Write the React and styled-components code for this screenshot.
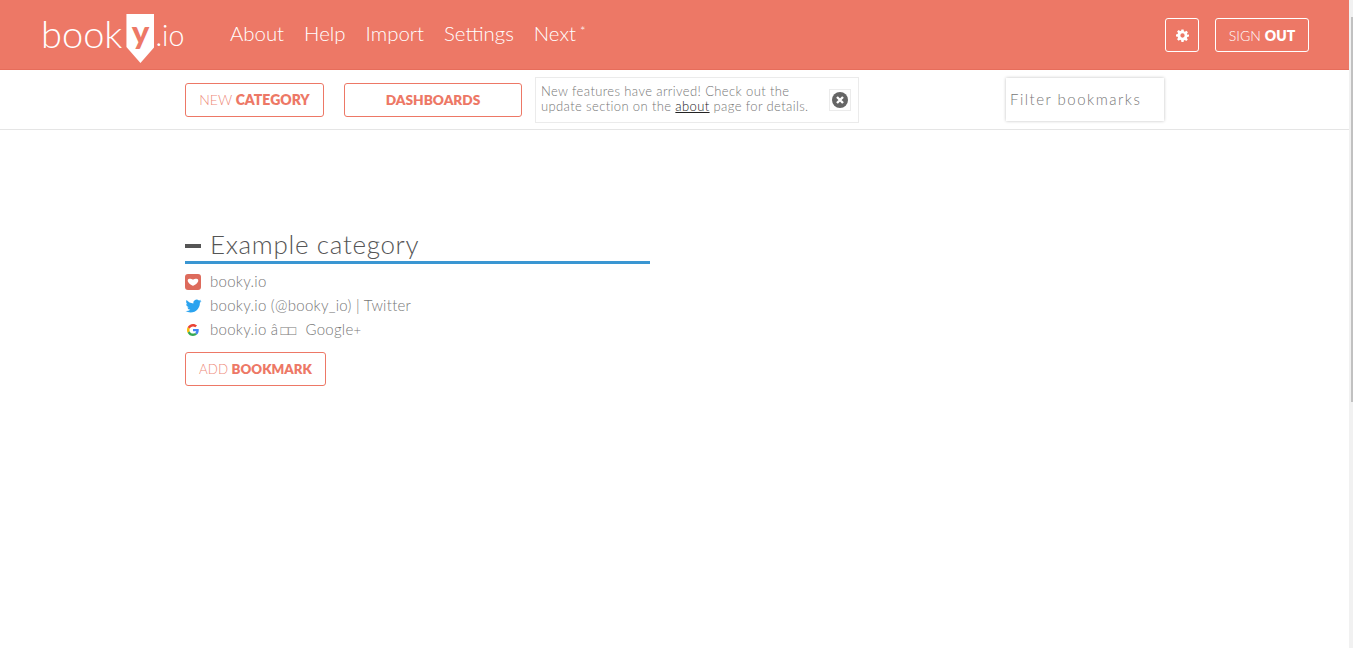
import React from "react";
import styled, { createGlobalStyle } from "styled-components";

const Global = createGlobalStyle`
  html, body { margin: 0; padding: 0; background: #fff; overflow: hidden; }
  body { font-family: Lato, "Liberation Sans", sans-serif; font-weight: 300; }
`;
const coral = "#ed7866";

const Page = styled.div`
  position: relative;
  width: 1353px;
  height: 648px;
  overflow: hidden;
`;
const Content = styled.div`
  width: 1349px;
`;
const Header = styled.header`
  height: 69px;
  background: ${coral};
  border-bottom: 1px solid #e66d5b;
  display: flex;
  align-items: flex-start;
  padding: 0 40px 0 41px;
`;
const Logo = styled.a`
  display: flex;
  align-items: flex-start;
  width: 189px;
  color: #fff;
`;
const LogoWord = styled.span`
  font-size: 38px;
  line-height: 1;
  margin-top: 14px;
`;
const LogoTag = styled.span`
  width: 28px;
  height: 49px;
  margin: 14px 1px 0 4px;
  background: #fff;
  clip-path: polygon(0 0, 100% 0, 100% 33px, 50% 100%, 0 33px);
  color: ${coral};
  font-size: 33px;
  line-height: 35px;
  font-weight: 900;
  text-align: center;
`;
const LogoSuffix = styled.span`
  font-size: 28.5px;
  line-height: 1;
  margin-top: 21px;
`;
const Nav = styled.nav`
  display: flex;
  gap: 20px;
  margin-top: 22px;
`;
const NavLink = styled.a`
  color: #fff;
  font-size: 20.4px;
  line-height: 23px;
`;
const Star = styled.sup`
  font-size: 13px;
  line-height: 0;
  margin-left: 4px;
  vertical-align: 5px;
`;
const HeaderRight = styled.div`
  margin-left: auto;
  display: flex;
  gap: 16px;
  margin-top: 18px;
`;
const HeaderButton = styled.button`
  box-sizing: border-box;
  height: 34px;
  width: ${(p) => p.$w}px;
  padding: 0;
  display: flex;
  align-items: center;
  justify-content: center;
  background: transparent;
  border: 1px solid #fff;
  border-radius: 3px;
  color: #fff;
  font-family: inherit;
  font-size: 14px;
  font-weight: 300;
  b { font-weight: 800; margin-left: 4px; }
`;
const Toolbar = styled.div`
  box-sizing: border-box;
  height: 60px;
  border-bottom: 1px solid #e5e5e5;
  padding: 7px 0 0 185px;
  display: flex;
  align-items: flex-start;
`;
const OutlineButton = styled.button`
  box-sizing: border-box;
  height: 34px;
  width: ${(p) => p.$w}px;
  margin: ${(p) => p.$m || "6px 0 0 0"};
  padding: 0 0 ${(p) => p.$pb ?? 2}px;
  background: #fff;
  border: 1px solid ${coral};
  border-radius: 3px;
  color: #ee8a7a;
  font-family: inherit;
  font-size: ${(p) => p.$size || 14}px;
  font-weight: 300;
  b { font-weight: 800; color: ${coral}; }
`;
const Notice = styled.div`
  box-sizing: border-box;
  width: 324px;
  height: 46px;
  margin-left: 13px;
  border: 1px solid #ebebeb;
  display: flex;
  align-items: center;
  padding: 0 6px 2px 5px;
  justify-content: space-between;
`;
const NoticeText = styled.p`
  margin: 0;
  font-size: 13px;
  line-height: 15px;
  color: #777;
  letter-spacing: 0.38px;
  a { color: #222; text-decoration: underline; }
`;
const CloseBox = styled.span`
  box-sizing: border-box;
  width: 22px;
  height: 22px;
  margin: 2px 1px 0 0;
  border: 1px solid #ebebeb;
  display: flex;
  align-items: center;
  justify-content: center;
`;
const Filter = styled.div`
  box-sizing: border-box;
  width: 158px;
  height: 43px;
  margin: 1px 0 0 147px;
  padding: 0 0 2px 4px;
  display: flex;
  align-items: center;
  background: #fff;
  box-shadow: 0 0 3px rgba(0, 0, 0, 0.25);
  color: #777;
  font-size: 15px;
  letter-spacing: 1.5px;
`;
const Main = styled.main`
  width: 465px;
  margin: 99px 0 0 185px;
`;
const CategoryHead = styled.div`
  display: flex;
  align-items: center;
  height: 32px;
  border-bottom: 3px solid #3a96d2;
`;
const Dash = styled.span`
  width: 16px;
  height: 4px;
  background: #555;
  margin: 2px 9px 0 0;
`;
const Title = styled.h2`
  margin: 0 0 2px;
  font-size: 26px;
  font-weight: 300;
  color: #555;
  letter-spacing: 0.67px;
`;
const List = styled.ul`
  list-style: none;
  margin: 6px 0 0;
  padding: 0;
`;
const Item = styled.li`
  height: 24px;
  display: flex;
  align-items: center;
  color: #777;
  font-size: 15px;
  letter-spacing: 0.27px;
`;
const IconSlot = styled.span`
  width: 25px;
  height: 16px;
  display: flex;
  flex: none;
`;
const Label = styled.span`
  line-height: 24px;
  margin-top: -2px;
  white-space: pre;
`;
const Tofu = styled.span`
  font-family: "DejaVu Sans", sans-serif;
  font-size: 13px;
  line-height: 0;
  letter-spacing: 0;
  margin: 0 5px 0 2px;
`;
const SmallPlus = styled.span`
  font-size: 13px;
  line-height: 0;
`;
const Scrollbar = styled.div`
  position: absolute;
  top: 0;
  right: 0;
  width: 4px;
  height: 100%;
  background: #f1f1f1;
`;
const Thumb = styled.div`
  margin: 17px 0 0 2px;
  width: 2px;
  height: 385px;
  background: #c1c1c1;
`;

const Gear = () => (
  <svg width="13" height="13" viewBox="0 0 24 24" fill="#fff">
    <path fillRule="evenodd" d="M10 1h4l.6 3.200 1.900.8 2.700-1.800 2.800 2.800-1.800 2.700.8 1.900L24 10v4l-3.200.6-.8 1.900 1.800 2.700-2.800 2.800-2.700-1.800-1.900.8L14 23.900h-4l-.6-3.100-1.900-.8-2.700 1.800L2 19l1.800-2.700-.8-1.900L0 14v-4l3-.6.8-1.900L2 4.800 4.800 2l2.700 1.800 1.900-.8zM12 8a4 4 0 1 0 0 8 4 4 0 0 0 0-8z" />
  </svg>
);
const CloseIcon = () => (
  <svg width="16" height="16" viewBox="0 0 16 16">
    <circle cx="8" cy="8" r="8" fill="#666" />
    <path d="M5 5l6 6M11 5l-6 6" stroke="#fff" strokeWidth="2.400" />
  </svg>
);
const PocketIcon = () => (
  <svg width="16" height="16" viewBox="0 0 16 16">
    <rect width="16" height="16" rx="3" fill="#dd6b5c" />
    <path d="M4.500 4.800C5.800 4.800 7.200 5 8 5.800 8.800 5 10.200 4.800 11.500 4.800c1.500 0 2 1.200 1.700 2.400-.4 1.500-3.200 4-5.200 4.600-2-.6-4.800-3.100-5.200-4.600-.3-1.200.2-2.400 1.700-2.400z" fill="#fff" />
  </svg>
);
const TwitterIcon = () => (
  <svg width="17" height="16" viewBox="0 0 24 24" fill="#2aa3ef">
    <path d="M23.950 4.570a10 10 0 0 1-2.820.77 4.960 4.960 0 0 0 2.160-2.720c-.95.550-2 .96-3.130 1.190a4.920 4.920 0 0 0-8.380 4.480C7.690 8.100 4.070 6.130 1.640 3.160a4.820 4.820 0 0 0-.67 2.480c0 1.710.87 3.210 2.190 4.100a4.900 4.900 0 0 1-2.230-.62v.06a4.920 4.920 0 0 0 3.950 4.830 5 5 0 0 1-2.210.08 4.940 4.940 0 0 0 4.600 3.420A9.870 9.870 0 0 1 0 19.540a13.940 13.940 0 0 0 7.550 2.210c9.050 0 14-7.500 14-13.980 0-.21 0-.42-.02-.63a9.940 9.940 0 0 0 2.420-2.570z" />
  </svg>
);
const GoogleIcon = () => (
  <svg width="16" height="16" viewBox="-8 -8 64 64">
    <path fill="#EA4335" d="M24 9.500c3.540 0 6.710 1.220 9.210 3.600l6.850-6.850C35.900 2.380 30.470 0 24 0 14.620 0 6.510 5.380 2.560 13.220l7.980 6.190C12.430 13.720 17.740 9.500 24 9.500z" />
    <path fill="#4285F4" d="M46.980 24.550c0-1.570-.15-3.090-.38-4.550H24v9.020h12.940c-.58 2.960-2.260 5.480-4.780 7.180l7.730 6c4.510-4.180 7.090-10.360 7.090-17.650z" />
    <path fill="#FBBC05" d="M10.530 28.590A14.500 14.500 0 0 1 9.770 24c0-1.600.28-3.140.76-4.590l-7.980-6.190A23.990 23.990 0 0 0 0 24c0 3.880.92 7.540 2.560 10.780l7.970-6.190z" />
    <path fill="#34A853" d="M24 48c6.480 0 11.930-2.130 15.890-5.810l-7.730-6c-2.150 1.450-4.920 2.300-8.160 2.300-6.260 0-11.570-4.220-13.470-9.910l-7.980 6.190C6.510 42.620 14.620 48 24 48z" />
  </svg>
);

const bookmarks = [
  { id: "site", icon: <PocketIcon />, label: "booky.io" },
  { id: "twitter", icon: <TwitterIcon />, label: "booky.io (@booky_io) | Twitter" },
  {
    id: "google",
    icon: <GoogleIcon />,
    label: (
      <>
        booky.io â<Tofu>□□</Tofu> Google<SmallPlus>+</SmallPlus>
      </>
    ),
  },
];

export default function App() {
  return (
    <Page>
      <Global />
      <Content>
        <Header>
          <Logo>
            <LogoWord>book</LogoWord>
            <LogoTag>y</LogoTag>
            <LogoSuffix>.io</LogoSuffix>
          </Logo>
          <Nav>
            <NavLink>About</NavLink>
            <NavLink>Help</NavLink>
            <NavLink>Import</NavLink>
            <NavLink>Settings</NavLink>
            <NavLink>Next<Star>*</Star></NavLink>
          </Nav>
          <HeaderRight>
            <HeaderButton $w={34} aria-label="Settings"><Gear /></HeaderButton>
            <HeaderButton $w={94}>SIGN <b>OUT</b></HeaderButton>
          </HeaderRight>
        </Header>
        <Toolbar>
          <OutlineButton $w={139}>NEW <b>CATEGORY</b></OutlineButton>
          <OutlineButton $w={178} $m="6px 0 0 20px" $size={13.7}><b>DASHBOARDS</b></OutlineButton>
          <Notice>
            <NoticeText>
              New features have arrived! Check out the<br />
              update section on the <a>about</a> page for details.
            </NoticeText>
            <CloseBox><CloseIcon /></CloseBox>
          </Notice>
          <Filter>Filter bookmarks</Filter>
        </Toolbar>
        <Main>
          <CategoryHead>
            <Dash />
            <Title>Example category</Title>
          </CategoryHead>
          <List>
            {bookmarks.map((b) => (
              <Item key={b.id}>
                <IconSlot>{b.icon}</IconSlot>
                <Label>{b.label}</Label>
              </Item>
            ))}
          </List>
          <OutlineButton $w={141} $m="10px 0 0 0" $size={13.3} $pb={0}>ADD <b>BOOKMARK</b></OutlineButton>
        </Main>
      </Content>
      <Scrollbar><Thumb /></Scrollbar>
    </Page>
  );
}
